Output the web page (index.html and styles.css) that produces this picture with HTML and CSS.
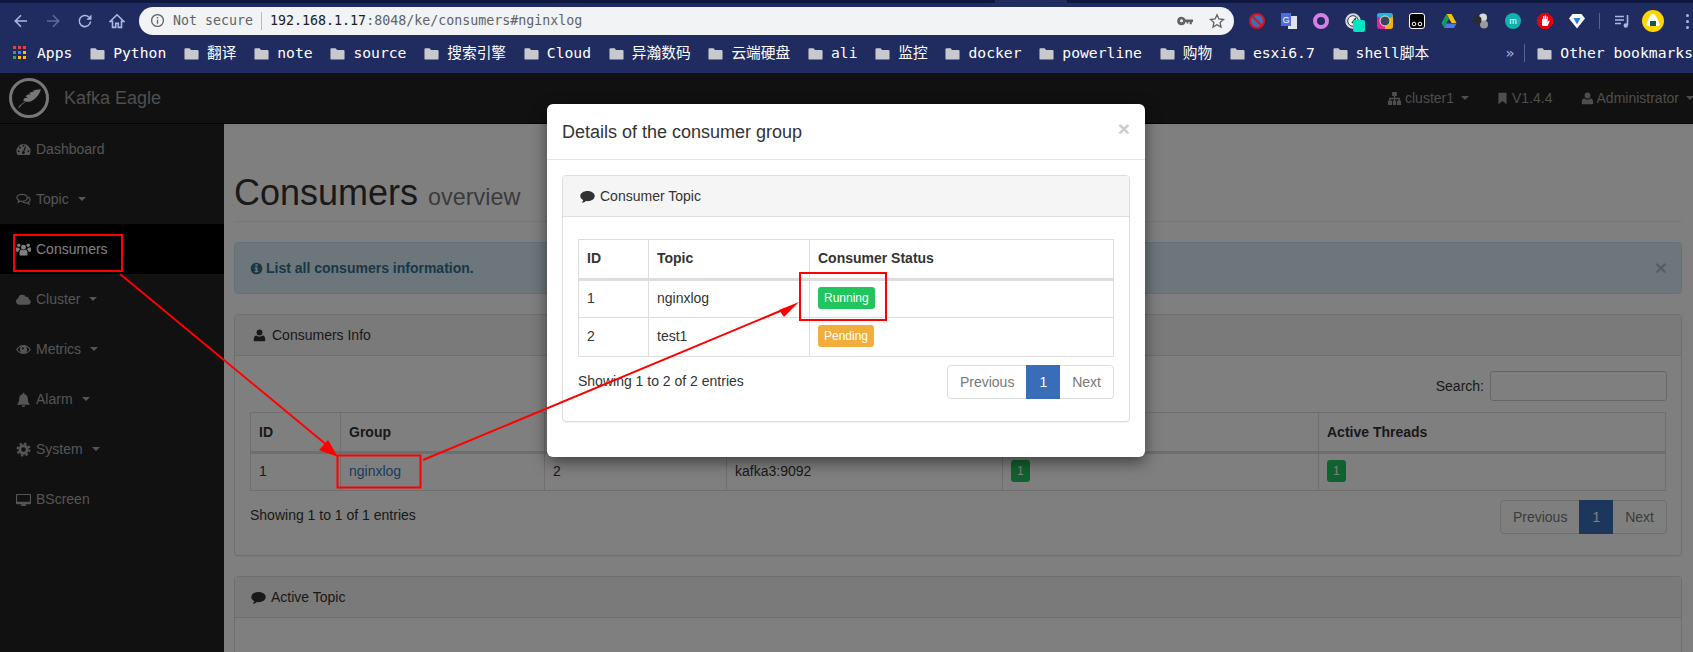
FILE: index.html
```html
<!DOCTYPE html>
<html lang="en">

<head>
  <meta charset="UTF-8">
  <title>Kafka Eagle - Consumers</title>
  <link rel="stylesheet" href="styles.css">
</head>

<body>
  <svg class="sprite" aria-hidden="true">
    <symbol id="i-dash" viewBox="0 0 16 16"><path fill-rule="evenodd" d="M8 2.2A7.6 7.6 0 0 0 .4 9.8c0 1.5.4 2.9 1.2 4h12.8c.8-1.1 1.2-2.5 1.2-4A7.6 7.6 0 0 0 8 2.2zM7 3.9a1 1 0 1 1 2 0a1 1 0 1 1-2 0zM3.2 5.8a1 1 0 1 1 2 0a1 1 0 1 1-2 0zM1.8 9.8a1 1 0 1 1 2 0a1 1 0 1 1-2 0zM12.2 9.8a1 1 0 1 1 2 0a1 1 0 1 1-2 0zM10.8 5.2l-2 5a1.5 1.5 0 1 1-1.2-.3l2-5z"/></symbol>
    <symbol id="i-comments" viewBox="0 0 16 16"><path fill="none" stroke="currentColor" stroke-width="1.3" d="M6.5 2.5c3 0 5.5 1.600 5.500 3.700S9.500 9.900 6.500 9.900c-.7 0-1.300-.1-1.900-.2L2.400 11l.6-2.200C1.700 8.100.9 7.200.9 6.200.9 4.100 3.500 2.500 6.500 2.500z"/><path fill="none" stroke="currentColor" stroke-width="1.300" d="M12.800 5.500c1.400.6 2.300 1.600 2.300 2.800 0 1-.7 1.900-1.800 2.500l.5 2-2.100-1.300c-2 .3-4-.2-5.100-1.500"/></symbol>
    <symbol id="i-users" viewBox="0 0 16 16"><circle cx="8" cy="5.600" r="2.600"/><circle cx="3" cy="3.400" r="1.800"/><circle cx="13" cy="3.400" r="1.800"/><path d="M3.800 14.500V11c0-2 1.200-3 2.200-3 .6.500 1.200.7 2 .7s1.400-.2 2-.7c1 0 2.200 1 2.200 3v3.500zM0 9.500V7.200c0-1 .6-1.700 1.300-1.700.5.400 1 .6 1.700.6h.6c-.1 1 .3 1.700.8 2.100-1 .4-1.700 1.100-2 2.300H1zM16 9.500V7.200c0-1-.6-1.700-1.300-1.700-.5.400-1 .6-1.700.6h-.6c.1 1-.3 1.700-.8 2.100 1 .4 1.700 1.100 2 2.300H15z"/></symbol>
    <symbol id="i-cloud" viewBox="0 0 16 16"><path d="M3.800 13.500A3.600 3.600 0 0 1 2.500 6.500 4 4 0 0 1 6.800 3a4.200 4.200 0 0 1 3.800 2.200 2.700 2.700 0 0 1 3.100 2.500 3 3 0 0 1-1.200 5.800z"/></symbol>
    <symbol id="i-eye" viewBox="0 0 16 16"><path fill-rule="evenodd" d="M8 3.200C4.600 3.200 1.800 5.200 0 8c1.800 2.800 4.600 4.800 8 4.800s6.200-2 8-4.800c-1.800-2.800-4.600-4.800-8-4.800zM1.500 8c1-1.500 2.200-2.600 3.700-3.300A3.900 3.900 0 0 0 4.200 8a3.800 3.800 0 0 0 7.600 0c0-1.300-.4-2.400-1-3.300 1.500.7 2.700 1.800 3.700 3.300-1.500 2.300-3.800 3.800-6.500 3.800S3 10.300 1.500 8zM6.200 6.800a1.100 1.100 0 1 1 2.200 0a1.100 1.100 0 1 1-2.200 0z"/></symbol>
    <symbol id="i-bell" viewBox="0 0 16 16"><path d="M8 .8c.6 0 1 .4 1 1v.5c2.300.4 3.600 2.100 3.600 4.500 0 3.200.8 4.800 2.100 5.900v.8H1.300v-.8c1.300-1.100 2.100-2.700 2.100-5.900 0-2.400 1.300-4.100 3.600-4.500v-.5c0-.6.400-1 1-1zM6.200 14.300h3.600a1.800 1.800 0 0 1-3.600 0z"/></symbol>
    <symbol id="i-cog" viewBox="0 0 16 16"><circle cx="8" cy="8" r="4" fill="none" stroke="currentColor" stroke-width="3"/><circle cx="8" cy="8" r="6.400" fill="none" stroke="currentColor" stroke-width="2.200" stroke-dasharray="2.500 2.520"/></symbol>
    <symbol id="i-desktop" viewBox="0 0 16 16"><path fill-rule="evenodd" d="M1 2h14a1 1 0 0 1 1 1v9a1 1 0 0 1-1 1h-5l.3 1.200H11V15H5v-.8h.700L6 13H1a1 1 0 0 1-1-1V3a1 1 0 0 1 1-1zM1.200 3.200V10.500h13.600V3.200z"/></symbol>
    <symbol id="i-comment" viewBox="0 0 16 16"><path d="M8 2c4.300 0 7.700 2.400 7.700 5.500S12.300 13 8 13c-.6 0-1.100 0-1.600-.1C5.300 13.900 3.800 14.600 1.800 14.800c.8-.8 1.400-1.800 1.600-3C1.400 10.800.3 9.300.3 7.500.3 4.400 3.700 2 8 2z"/></symbol>
    <symbol id="i-user" viewBox="0 0 16 16"><circle cx="8" cy="4.300" r="3.600"/><path d="M2 15c-.7 0-1.100-.5-1.100-1.200 0-3.300.9-5.800 3.300-5.800 1 .9 2.300 1.400 3.800 1.400s2.800-.5 3.800-1.400c2.400 0 3.300 2.500 3.300 5.800 0 .7-.4 1.200-1.100 1.200z"/></symbol>
    <symbol id="i-info" viewBox="0 0 16 16"><path fill-rule="evenodd" d="M8 .8a7.200 7.200 0 1 1 0 14.400A7.200 7.200 0 0 1 8 .8zM6.700 2.800v2.300h2.600V2.800zM5.800 6.400v1.500h1v3.200h-1v1.500h4.400v-1.500h-1V6.400z"/></symbol>
    <symbol id="i-sitemap" viewBox="0 0 16 16"><path d="M5.500 1h5v4.200H8.700v2.100h5.100v3.200H15v4.300h-4.400v-4.300h1.700V8.800H8.700v1.700h1v4.300H6.300v-4.300h1V8.800H3.700v1.700h1.700v4.300H1v-4.300h1.200V7.300h5.100V5.200H5.500z"/></symbol>
    <symbol id="i-bookmark" viewBox="0 0 16 16"><path d="M3 1h10v14l-5-4-5 4z"/></symbol>
    <symbol id="i-folder" viewBox="0 0 16 16"><path d="M1.500 2.500H6l1.500 1.700h7c.6 0 1 .4 1 1v8.300c0 .6-.4 1-1 1h-13c-.6 0-1-.4-1-1V3.500c0-.6.400-1 1-1z"/></symbol>
    <symbol id="i-feather" viewBox="0 0 24 24"><path d="M23 4c-2.800.2-5.500.5-8 1.600l2.300.5-3.900.5-1.600 1.200 2.600.6-4 .7-1.600 1.600 2.500.8-3.300.6-1.500 2.100 2.200 1c2.800.8 6.400-.2 8.800-2.600C20.300 10.200 22 7.600 23 4zM8.500 15.300C6.500 16.600 4.500 18 2 20.500l1 .4c1.600-2.100 3.500-3.700 5.500-4.900z"/></symbol>
  </svg>

  <header class="chrome">
    <div class="tab-strip"><span class="tab-tail"></span></div>
    <div class="toolbar">
      <div class="nav-btns">
        <svg viewBox="0 0 16 16" class="tool-icon"><path d="M14 8H2.500M8 2.300 2.300 8 8 13.700" /></svg>
        <svg viewBox="0 0 16 16" class="tool-icon tool-off"><path d="M2 8h11.500M8 2.300 13.700 8 8 13.700" /></svg>
        <svg viewBox="0 0 16 16" class="tool-icon"><path d="M13.500 8.500A5.600 5.600 0 1 1 11.800 4" /><path class="tool-fill" d="M14.500 1.500v5.200H9.300z" /></svg>
        <svg viewBox="0 0 16 16" class="tool-icon"><path d="M8 1.800 1.200 8.400h2.300v6h3.200v-4h2.600v4h3.200v-6h2.300z" /></svg>
      </div>
      <div class="omnibox">
        <svg viewBox="0 0 16 16" class="omni-info"><circle cx="8" cy="8" r="6.300" /><path d="M8 7.200v4.300M8 4.300v1.500" /></svg>
        <span class="not-secure">Not secure</span>
        <span class="omni-sep"></span>
        <span class="url"><b>192.168.1.17</b>:8048/ke/consumers#nginxlog</span>
        <svg viewBox="0 0 16 16" class="omni-key"><path fill-rule="evenodd" d="M4.500 3.800A4.200 4.200 0 0 1 8.500 6.500H16V9h-1.200v2.300h-2.200V9h-1.200v1.500H9.600V9H8.500a4.200 4.200 0 1 1-4-5.200zM4.500 6.300a1.500 1.500 0 1 0 0 3a1.500 1.500 0 0 0 0-3z" /></svg>
        <svg viewBox="0 0 16 16" class="omni-star"><path d="M8 1.800 9.900 6l4.600.5-3.400 3.100.9 4.500L8 11.800l-4 2.300.9-4.500L1.500 6.500 6.100 6z" /></svg>
      </div>
      <div class="extensions">
        <span class="ext"><svg viewBox="0 0 16 16"><circle cx="8" cy="8" r="7" fill="#3f6fb4" stroke="#e0101c" stroke-width="2" /><path d="M3.500 3.500l9 9" stroke="#e0101c" stroke-width="2" /></svg></span>
        <span class="ext"><svg viewBox="0 0 16 16"><rect x="7" y="3" width="9" height="13" fill="#dfe3e8" /><rect x="0" y="0" width="10" height="13" fill="#4a6fdc" /><text x="5" y="9.500" class="ext-text">G</text></svg></span>
        <span class="ext"><svg viewBox="0 0 16 16"><circle cx="8" cy="8" r="6" fill="none" stroke="#d77fe6" stroke-width="4" /></svg></span>
        <span class="ext ext-gauge"><svg viewBox="0 0 16 16"><circle cx="8" cy="8" r="7" fill="#dfe2e5" stroke="#d6d8dc" stroke-width="1.500" /><circle cx="8" cy="8" r="5.300" fill="#f4f5f6" stroke="#333" /><path d="M7 10l4-5" stroke="#333" stroke-width="1.500" /></svg><i class="ext-badge"></i></span>
        <span class="ext"><svg viewBox="0 0 16 16"><rect width="16" height="16" rx="3" fill="#e0249a" /><path d="M16 3v10a3 3 0 0 1-3 3H8V8z" fill="#f0b400" /><path d="M0 3a3 3 0 0 1 3-3h10a3 3 0 0 1 3 3L8 8z" fill="#20b4d8" /><circle cx="8" cy="8" r="5" fill="#3a4654" stroke="#dfe2e5" /></svg></span>
        <span class="ext"><svg viewBox="0 0 16 16"><rect x=".5" y=".5" width="15" height="15" rx="2.500" fill="#000" stroke="#fff" /><circle cx="5" cy="11" r="1.800" fill="none" stroke="#fff" /><circle cx="11" cy="11" r="1.800" fill="none" stroke="#fff" /></svg></span>
        <span class="ext"><svg viewBox="0 0 16 16"><path d="M5.500 1h5l5 9h-5z" fill="#f4c20d" /><path d="M5.500 1 .5 10l2.500 4.500L8 5.500z" fill="#0f9d58" /><path d="M5 10.500h10.500L13 15H3z" fill="#4a7ae8" /></svg></span>
        <span class="ext"><svg viewBox="0 0 16 16"><circle cx="10" cy="4.500" r="4" fill="#d8d8d8" /><circle cx="11" cy="11.500" r="4" fill="#9a9a9a" /><circle cx="4.500" cy="7" r="4" fill="#2b2b2b" /></svg></span>
        <span class="ext"><svg viewBox="0 0 16 16"><circle cx="8" cy="8" r="8" fill="#0fb3ad" /><text x="8" y="11" class="ext-text">m</text></svg></span>
        <span class="ext"><svg viewBox="0 0 16 16"><path d="M5 0h6l5 5v6l-5 5H5l-5-5V5z" fill="#e8000e" /><path d="M5 12V6h1V3h1.200v3h.5V2.500H9V6h.5V3.500h1.200V9L12 7.500l.8.600L10.500 13H6z" fill="#fff" /></svg></span>
        <span class="ext"><svg viewBox="0 0 16 16"><path d="M3.500 1h9L16 5.500 8 15.500 0 5.500z" fill="#fff" /><path d="M4.500 5h7L8 11.500z" fill="#2a7be0" /></svg></span>
      </div>
      <span class="tool-sep"></span>
      <svg viewBox="0 0 16 16" class="tool-icon media-icon"><path d="M1 3.500h9M1 7h9M1 10.500h6M13.500 2v10" /><circle class="tool-fill" cx="11.800" cy="12.500" r="2.200" /></svg>
      <span class="avatar"><svg viewBox="0 0 22 22"><circle cx="11" cy="11" r="11" fill="#ffd600" /><path d="M11 4c1.500 0 2.500 1 3.500 3l3 6.500c.5 1.500-.3 2.500-1.500 2.500H6c-1.200 0-2-1-1.500-2.500l3-6.500c1-2 2-3 3.500-3z" fill="#fff" /><rect x="8" y="11" width="6" height="5" fill="#0e5a50" /></svg></span>
      <span class="menu-dots"><i></i><i></i><i></i></span>
    </div>
    <div class="bookmarks">
      <span class="bm"><span class="apps-grid"><i class="r"></i><i class="r"></i><i class="r"></i><i class="g"></i><i class="b"></i><i class="y"></i><i class="g"></i><i class="y"></i><i class="y"></i></span>Apps</span>
      <span class="bm"><svg class="folder"><use href="#i-folder" /></svg>Python</span>
      <span class="bm"><svg class="folder"><use href="#i-folder" /></svg>翻译</span>
      <span class="bm"><svg class="folder"><use href="#i-folder" /></svg>note</span>
      <span class="bm"><svg class="folder"><use href="#i-folder" /></svg>source</span>
      <span class="bm"><svg class="folder"><use href="#i-folder" /></svg>搜索引擎</span>
      <span class="bm"><svg class="folder"><use href="#i-folder" /></svg>Cloud</span>
      <span class="bm"><svg class="folder"><use href="#i-folder" /></svg>异瀚数码</span>
      <span class="bm"><svg class="folder"><use href="#i-folder" /></svg>云端硬盘</span>
      <span class="bm"><svg class="folder"><use href="#i-folder" /></svg>ali</span>
      <span class="bm"><svg class="folder"><use href="#i-folder" /></svg>监控</span>
      <span class="bm"><svg class="folder"><use href="#i-folder" /></svg>docker</span>
      <span class="bm"><svg class="folder"><use href="#i-folder" /></svg>powerline</span>
      <span class="bm"><svg class="folder"><use href="#i-folder" /></svg>购物</span>
      <span class="bm"><svg class="folder"><use href="#i-folder" /></svg>esxi6.7</span>
      <span class="bm"><svg class="folder"><use href="#i-folder" /></svg>shell脚本</span>
      <span class="bm-right">
        <span class="bm-more">»</span>
        <span class="bm-sep"></span>
        <span class="bm"><svg class="folder"><use href="#i-folder" /></svg>Other bookmarks</span>
      </span>
    </div>
  </header>

  <div class="app">
    <nav class="topnav">
      <div class="brand">
        <span class="brand-logo"><svg><use href="#i-feather" /></svg></span>
        <span class="brand-name">Kafka Eagle</span>
      </div>
      <div class="topnav-right">
        <span class="topnav-item"><svg class="icon"><use href="#i-sitemap" /></svg>cluster1<i class="caret"></i></span>
        <span class="topnav-item"><svg class="icon icon-narrow"><use href="#i-bookmark" /></svg>V1.4.4</span>
        <span class="topnav-item"><svg class="icon icon-narrow"><use href="#i-user" /></svg>Administrator<i class="caret"></i></span>
      </div>
    </nav>

    <div class="layout">
      <aside class="sidebar">
        <a class="side-item"><svg class="icon"><use href="#i-dash" /></svg>Dashboard</a>
        <a class="side-item"><svg class="icon"><use href="#i-comments" /></svg>Topic<i class="caret"></i></a>
        <a class="side-item side-active"><svg class="icon"><use href="#i-users" /></svg>Consumers</a>
        <a class="side-item"><svg class="icon"><use href="#i-cloud" /></svg>Cluster<i class="caret"></i></a>
        <a class="side-item"><svg class="icon"><use href="#i-eye" /></svg>Metrics<i class="caret"></i></a>
        <a class="side-item"><svg class="icon"><use href="#i-bell" /></svg>Alarm<i class="caret"></i></a>
        <a class="side-item"><svg class="icon"><use href="#i-cog" /></svg>System<i class="caret"></i></a>
        <a class="side-item"><svg class="icon"><use href="#i-desktop" /></svg>BScreen</a>
      </aside>

      <main class="wrapper">
        <div class="page-header">
          <h1>Consumers <small>overview</small></h1>
        </div>

        <div class="alert">
          <strong><svg class="icon icon-info"><use href="#i-info" /></svg>List all consumers information.</strong>
          <span class="alert-close">×</span>
        </div>

        <section class="panel">
          <div class="panel-heading"><svg class="icon icon-user"><use href="#i-user" /></svg>Consumers Info</div>
          <div class="panel-body">
            <div class="search-row">
              <label>Search:</label>
              <input class="search-input" type="text">
            </div>
            <table class="grid grid-main">
              <colgroup>
                <col class="c-id">
                <col class="c-group">
                <col class="c-topics">
                <col class="c-node">
                <col class="c-active">
                <col class="c-threads">
              </colgroup>
              <thead>
                <tr>
                  <th>ID</th>
                  <th>Group</th>
                  <th>Topics</th>
                  <th>Node</th>
                  <th>Active Topics</th>
                  <th>Active Threads</th>
                </tr>
              </thead>
              <tbody>
                <tr>
                  <td>1</td>
                  <td><a class="link">nginxlog</a></td>
                  <td>2</td>
                  <td>kafka3:9092</td>
                  <td><span class="badge badge-green">1</span></td>
                  <td><span class="badge badge-green">1</span></td>
                </tr>
              </tbody>
            </table>
            <div class="table-foot table-foot-main">
              <span>Showing 1 to 1 of 1 entries</span>
              <div class="pager">
                <a>Previous</a><a class="pager-on">1</a><a>Next</a>
              </div>
            </div>
          </div>
        </section>

        <section class="panel">
          <div class="panel-heading"><svg class="icon icon-chat"><use href="#i-comment" /></svg>Active Topic</div>
          <div class="panel-body panel-tall"></div>
        </section>
      </main>
    </div>

    <div class="backdrop"></div>

    <div class="modal">
      <div class="modal-header">
        <h4>Details of the consumer group</h4>
        <span class="modal-close">×</span>
      </div>
      <div class="modal-body">
        <section class="panel panel-modal">
          <div class="panel-heading"><svg class="icon icon-chat2"><use href="#i-comment" /></svg>Consumer Topic</div>
          <div class="panel-body panel-body-modal">
            <table class="grid grid-modal">
              <colgroup>
                <col class="m-id">
                <col class="m-topic">
                <col class="m-status">
              </colgroup>
              <thead>
                <tr>
                  <th>ID</th>
                  <th>Topic</th>
                  <th>Consumer Status</th>
                </tr>
              </thead>
              <tbody>
                <tr>
                  <td>1</td>
                  <td>nginxlog</td>
                  <td><span class="badge badge-green">Running</span></td>
                </tr>
                <tr>
                  <td>2</td>
                  <td>test1</td>
                  <td><span class="badge badge-orange">Pending</span></td>
                </tr>
              </tbody>
            </table>
            <div class="table-foot table-foot-modal">
              <span>Showing 1 to 2 of 2 entries</span>
              <div class="pager">
                <a>Previous</a><a class="pager-on">1</a><a>Next</a>
              </div>
            </div>
          </div>
        </section>
      </div>
    </div>
  </div>

  <svg class="marks" viewBox="0 0 1693 652">
    <rect x="14" y="235" width="108" height="36" />
    <rect x="337.500" y="455.500" width="83" height="32" />
    <rect x="800" y="273" width="86" height="47" />
    <path d="M120 274 328 446" />
    <path class="mark-head" d="M338 457 319 450 328 440z" />
    <path d="M423 460 785 309" />
    <path class="mark-head" d="M799 302 779 310 784 317z" />
  </svg>
</body>

</html>
```

FILE: styles.css
```css
* {
  box-sizing: border-box;
}

html,
body {
  margin: 0;
  height: 652px;
  overflow: hidden;
}

body {
  position: relative;
  font-family: "Liberation Sans", Arial, sans-serif;
  font-size: 14px;
  line-height: 20px;
  color: #333;
  background-color: #fff;
}

.sprite {
  display: none;
}

.icon {
  width: 15px;
  height: 15px;
  fill: currentColor;
  flex: none;
}

/* browser chrome */

.chrome {
  height: 73px;
  background-color: #202c5f;
  font-family: "DejaVu Sans Mono", "Noto Sans CJK SC", monospace;
}

.tab-strip {
  height: 3px;
  background-color: #0e1840;
  position: relative;
}

.tab-tail {
  position: absolute;
  left: 995px;
  top: 0;
  width: 72px;
  height: 3px;
  background-color: #202c5f;
}

.toolbar {
  height: 36px;
  display: flex;
  align-items: center;
}

.nav-btns {
  display: flex;
  width: 139px;
  padding-left: 13px;
  gap: 16px;
}

.tool-icon {
  width: 16px;
  height: 16px;
  fill: none;
  stroke: #a9b8e3;
  stroke-width: 1.6;
  flex: none;
}

.tool-off {
  stroke: #5c6a9e;
}

.tool-fill {
  fill: #a9b8e3;
  stroke: none;
}

.omnibox {
  width: 1095px;
  height: 28px;
  margin-top: -1px;
  border-radius: 14px;
  background-color: #f1f3f4;
  display: flex;
  align-items: center;
  padding-left: 11px;
  font-size: 13.3px;
  color: #5f6368;
}

.omni-info {
  width: 15px;
  height: 15px;
  fill: none;
  stroke: #5f6368;
  stroke-width: 1.4;
}

.not-secure {
  margin-left: 8px;
}

.omni-sep {
  width: 1px;
  height: 18px;
  margin: 0 8px 0 8px;
  background-color: #b8bcc2;
}

.url b {
  font-weight: normal;
  color: #202124;
}

.omni-key {
  width: 16px;
  height: 16px;
  margin-left: auto;
  fill: #5f6368;
}

.omni-star {
  width: 16px;
  height: 16px;
  margin: 0 9px 0 16px;
  fill: none;
  stroke: #5f6368;
  stroke-width: 1.3;
}

.extensions {
  display: flex;
  margin-left: 7px;
}

.ext {
  width: 32px;
  display: flex;
  justify-content: center;
  position: relative;
}

.ext svg {
  width: 16px;
  height: 16px;
}

.ext-text {
  font-family: "Liberation Sans", sans-serif;
  font-size: 9px;
  fill: #fff;
  text-anchor: middle;
}

.ext-badge {
  position: absolute;
  left: 16px;
  top: 7px;
  width: 12px;
  height: 12px;
  border-radius: 2px;
  background-color: #00e6c3;
}

.tool-sep {
  width: 1px;
  height: 16px;
  margin: 0 14px 0 6px;
  background-color: #56628f;
}

.media-icon {
  margin-right: 12px;
}

.avatar svg {
  display: block;
  width: 22px;
  height: 22px;
}

.menu-dots {
  display: flex;
  flex-direction: column;
  gap: 3px;
  margin-left: 22px;
}

.menu-dots i {
  width: 3px;
  height: 3px;
  border-radius: 50%;
  background-color: #a9b8e3;
}

.bookmarks {
  height: 34px;
  padding: 0 0 6px 13px;
  display: flex;
  align-items: center;
  gap: 17.800px;
  font-size: 14.700px;
  color: #fff;
  white-space: nowrap;
}

.bm {
  display: flex;
  align-items: center;
  gap: 8px;
}

.folder {
  width: 15px;
  height: 15px;
  fill: #c8c9cc;
}

.apps-grid {
  width: 15px;
  height: 15px;
  display: grid;
  grid-template-columns: repeat(3, 3px);
  grid-auto-rows: 3px;
  gap: 2px;
  margin-right: 1px;
}

.apps-grid .r {
  background-color: #ea4335;
}

.apps-grid .g {
  background-color: #34a853;
}

.apps-grid .b {
  background-color: #4285f4;
}

.apps-grid .y {
  background-color: #fbbc05;
}

.bm-right {
  margin-left: auto;
  display: flex;
  align-items: center;
}

.bm-more {
  color: #a9b8e3;
  margin-right: 10px;
}

.bm-sep {
  width: 1px;
  height: 18px;
  margin-right: 12px;
  background-color: #56628f;
}

/* page under the dialog */

.app {
  position: relative;
  height: 579px;
  overflow: hidden;
}

.topnav {
  height: 51px;
  background-color: #222;
  border-bottom: 1px solid #080808;
  display: flex;
  align-items: center;
  justify-content: space-between;
  color: #9d9d9d;
}

.brand {
  display: flex;
  align-items: center;
  padding-left: 9px;
}

.brand-logo {
  width: 40px;
  height: 40px;
  border: 3px solid #eee;
  border-radius: 50%;
  display: flex;
  align-items: center;
  justify-content: center;
}

.brand-logo svg {
  width: 26px;
  height: 26px;
  fill: #eee;
}

.brand-name {
  margin-left: 15px;
  font-size: 18px;
}

.topnav-right {
  display: flex;
  width: 306px;
}

.topnav-item {
  display: flex;
  align-items: center;
  gap: 3px;
  margin-right: 28px;
  white-space: nowrap;
}

.topnav-item:first-child {
  margin-right: 27px;
}

.topnav-item:last-child {
  margin-right: 0;
}

.topnav-item .caret {
  margin-left: 4px;
}

.icon-narrow {
  width: 13px;
}

.caret {
  display: inline-block;
  width: 0;
  height: 0;
  margin-left: 4px;
  border-top: 4px solid currentColor;
  border-left: 4px solid transparent;
  border-right: 4px solid transparent;
}

.layout {
  display: flex;
  height: 528px;
}

.sidebar {
  width: 224px;
  flex: none;
  background-color: #222;
}

.side-item {
  height: 50px;
  padding-left: 16px;
  display: flex;
  align-items: center;
  gap: 5px;
  color: #aaa;
}

.side-active {
  background-color: #000;
  color: #fff;
}

.wrapper {
  flex: 1;
  padding: 0 11px 0 10px;
  background-color: #fff;
}

.page-header {
  margin-top: 49px;
  padding-bottom: 8px;
  border-bottom: 1px solid #eee;
}

h1 {
  margin: 0;
  font-size: 36px;
  font-weight: 500;
  line-height: 40px;
}

h1 small {
  font-size: 23.400px;
  font-weight: 400;
  line-height: 1;
  color: #777;
}

.alert {
  margin-top: 20px;
  height: 52px;
  padding: 15px;
  display: flex;
  justify-content: space-between;
  align-items: center;
  border: 1px solid #bce8f1;
  border-radius: 4px;
  background-color: #d9edf7;
  color: #31708f;
}

.alert strong {
  display: flex;
  align-items: center;
  gap: 3px;
}

.icon-info {
  width: 13px;
  height: 13px;
}

.alert-close {
  font-size: 21px;
  font-weight: 700;
  color: #000;
  opacity: 0.2;
  margin-right: -1px;
}

.panel {
  margin-top: 20px;
  border: 1px solid #ddd;
  border-radius: 4px;
  background-color: #fff;
  box-shadow: 0 1px 1px rgba(0, 0, 0, 0.05);
}

.panel-heading {
  height: 41px;
  padding: 0 15px;
  display: flex;
  align-items: center;
  background-color: #f5f5f5;
  border-bottom: 1px solid #ddd;
  border-radius: 3px 3px 0 0;
}

.icon-user {
  width: 13px;
  height: 13px;
  margin: 0 6px 0 3px;
}

.icon-chat {
  width: 15px;
  height: 15px;
  margin: 0 5px 0 1px;
}

.icon-chat2 {
  width: 15px;
  height: 15px;
  margin: 0 5px 0 2px;
}

.panel-body {
  padding: 15px 15px 21px;
}

.panel-tall {
  height: 200px;
}

.search-row {
  display: flex;
  justify-content: flex-end;
  align-items: center;
  gap: 6px;
  height: 30px;
  margin: 0 -1px 11px 0;
}

.search-input {
  width: 177px;
  height: 30px;
  border: 1px solid #ccc;
  border-radius: 3px;
  background-color: #fff;
}

.grid {
  border-collapse: collapse;
  table-layout: fixed;
}

.grid th,
.grid td {
  padding: 0 8px;
  border: 1px solid #ddd;
  text-align: left;
  height: 38px;
}

.grid td {
  padding-bottom: 2px;
}

.grid th {
  height: 40px;
  font-weight: 700;
  border-bottom-width: 3px;
}

.grid-main {
  width: 1415px;
}

.c-id {
  width: 90px;
}

.c-group {
  width: 204px;
}

.c-topics {
  width: 182px;
}

.c-node {
  width: 276px;
}

.c-active {
  width: 316px;
}

.c-threads {
  width: 347px;
}

.grid-modal {
  width: 535px;
}

.grid-modal th {
  padding-bottom: 2px;
}

.grid-modal tr + tr td {
  height: 39px;
}

.m-id {
  width: 70px;
}

.m-topic {
  width: 161px;
}

.m-status {
  width: 304px;
}

.link {
  color: #337ab7;
}

.badge {
  display: inline-block;
  height: 22px;
  padding: 0 6px;
  border-radius: 3px;
  font-size: 12px;
  line-height: 22px;
  color: #fff;
  vertical-align: middle;
}

.badge-green {
  background-color: #21c55d;
}

.badge-orange {
  background-color: #f2ae3d;
}

.table-foot {
  display: flex;
  justify-content: space-between;
  align-items: flex-start;
  margin-top: 9px;
}

.table-foot > span {
  margin-top: 6px;
}

.table-foot-main {
  margin-right: -1px;
}

.table-foot-main > span {
  margin-top: 5px;
}

.table-foot-modal {
  margin-top: 8px;
}

.pager {
  display: flex;
  height: 34px;
  border: 1px solid #ddd;
  border-radius: 4px;
  color: #777;
  background-color: #fff;
}

.pager a {
  padding: 0 12px;
  line-height: 32px;
}

.pager .pager-on {
  margin: -1px 0;
  padding: 0 13px;
  height: 34px;
  line-height: 34px;
  background-color: #3a6db8;
  color: #fff;
}

/* dialog */

.backdrop {
  position: absolute;
  inset: 0;
  background-color: rgba(0, 0, 0, 0.5);
}

.modal {
  position: absolute;
  left: 547px;
  top: 31px;
  width: 598px;
  height: 353px;
  border-radius: 6px;
  background-color: #fff;
  box-shadow: 0 5px 15px rgba(0, 0, 0, 0.5);
}

.modal-header {
  height: 56px;
  padding: 0 15px;
  display: flex;
  align-items: center;
  justify-content: space-between;
  border-bottom: 1px solid #e5e5e5;
}

h4 {
  margin: 0;
  font-size: 18px;
  font-weight: 500;
}

.modal-close {
  font-size: 21px;
  font-weight: 700;
  color: #000;
  opacity: 0.2;
  margin-top: -6px;
}

.modal-body {
  padding: 15px;
}

.panel-modal {
  margin-top: 0;
}

.panel-body-modal {
  padding: 22px 15px 22px;
}

/* red hand-drawn notes */

.marks {
  position: absolute;
  left: 0;
  top: 0;
  width: 1693px;
  height: 652px;
  fill: none;
  stroke: #f00;
  stroke-width: 2;
  pointer-events: none;
}

.marks .mark-head {
  fill: #f00;
  stroke: none;
}
```
